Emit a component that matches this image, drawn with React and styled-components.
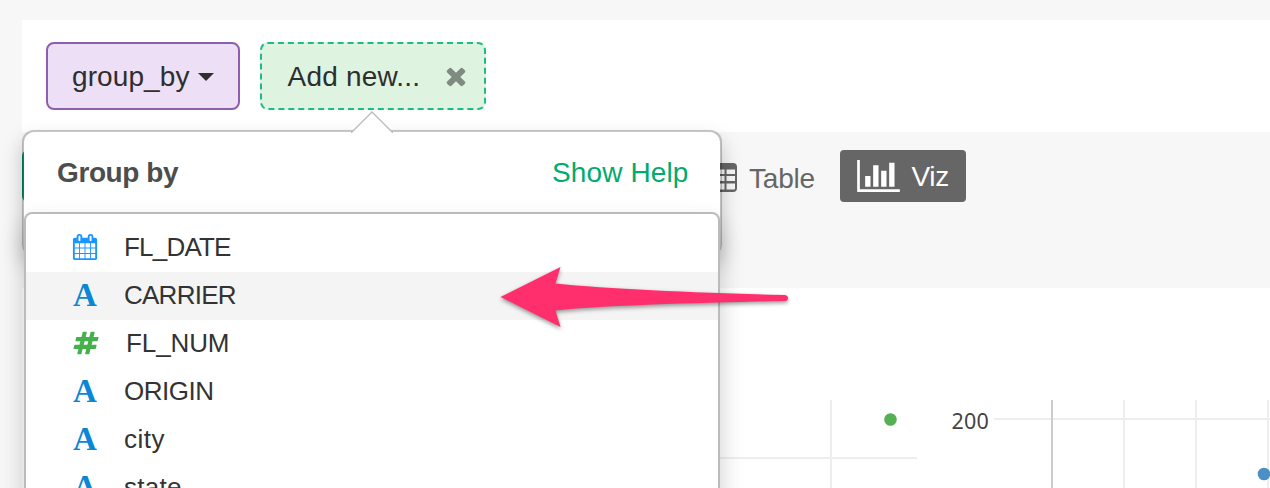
import React from "react";
import styled, { createGlobalStyle } from "styled-components";

const Global = createGlobalStyle`
  * { box-sizing: border-box; }
  html, body { margin: 0; padding: 0; }
  body { overflow: hidden; background: #f7f7f7; }
`;

const Page = styled.div`
  width: 1270px;
  height: 488px;
  padding: 20px 0 0 22px;
  overflow: hidden;
  background: #f7f7f7;
  color: #2e2e2e;
  font-family: "Liberation Sans", Arial, sans-serif;
  font-size: 28px;
  line-height: 32px;
`;

const Steps = styled.header`
  display: flex;
  gap: 20px;
  height: 112px;
  padding: 22px 24px;
  background: #fff;
`;

const Token = styled.div`
  position: relative;
  display: flex;
  align-items: center;
  flex: none;
  width: 194px;
  height: 68px;
  padding: 0 0 0 24px;
  border: 2px solid #8d5fae;
  border-radius: 8px;
  background: #ecdff6;
`;

const NewToken = styled(Token)`
  width: 226px;
  padding-left: 25.500px;
  border: 2px dashed #1ebc85;
  background: #dff4e0;
`;

const Caret = styled.span`
  margin: 2px 0 0 8px;
  border: 8px solid transparent;
  border-top-color: #2f2f2f;
  border-bottom: 0;
`;

const Icon = styled.svg`
  display: block;
  flex: none;
  width: ${(p) => p.$w || 26}px;
  height: ${(p) => p.$h || 26}px;
  margin-left: ${(p) => p.$ml || 0}px;
  fill: ${(p) => p.$color || "currentColor"};
`;

const LetterIcon = styled.span`
  flex: none;
  width: 26px;
  font: bold 33px/44px "Liberation Serif", "Times New Roman", serif;
  text-align: center;
  color: ${(p) => p.$color};
`;

const Label = styled.span`
  flex: none;
  padding-top: 2px;
  white-space: pre;
  letter-spacing: ${(p) => p.$ls || 0}px;
  margin-left: ${(p) => p.$gap || 0}px;
`;

const ViewBar = styled.nav`
  display: flex;
  align-items: flex-start;
  height: 156px;
  padding-top: 18px;
  background: #f7f7f7;
`;

const RunButton = styled.div`
  width: 120px;
  height: 52px;
  border-radius: 6px;
  background: #00a86b;
`;

const ViewTab = styled.div`
  display: flex;
  align-items: center;
  height: 52px;
  border-radius: 4px;
  color: ${(p) => (p.$active ? "#fff" : "#666")};
  background: ${(p) => (p.$active ? "#666" : "transparent")};
  width: ${(p) => p.$width}px;
  padding: ${(p) => (p.$active ? "0 0 0 17px" : "3px 0 0")};
  margin-left: ${(p) => p.$ml || 0}px;
`;

const Charts = styled.main`
  display: flex;
  height: 200px;
  background: #fff;
`;

const Popover = styled.section`
  position: absolute;
  top: 86px;
  left: -240px;
  z-index: 2;
  width: 700px;
  height: 126px;
  border: 2px solid rgba(0, 0, 0, 0.22);
  border-radius: 12px;
  background: #fff;
  background-clip: padding-box;
  box-shadow: 0 10px 20px rgba(0, 0, 0, 0.22);
`;

const Pointer = styled.svg`
  position: absolute;
  top: -21px;
  left: 327px;
  width: 42px;
  height: 22px;
`;

const PopoverHead = styled.div`
  display: flex;
  justify-content: space-between;
  align-items: center;
  height: 81px;
  padding: 0 31.500px 0 33px;
`;

const Title = styled.h2`
  margin: 0;
  font-size: 28px;
  letter-spacing: -0.4px;
  color: #4d4d4d;
`;

const Help = styled.a`
  color: #00ab6b;
  letter-spacing: 0.12px;
`;

const Menu = styled.ul`
  position: relative;
  width: 696px;
  height: 420px;
  margin: -1px 0 0 0;
  padding: 10px 0;
  list-style: none;
  border: 2px solid #bbb;
  border-radius: 8px;
  background: #fff;
  box-shadow: 0 12px 24px rgba(0, 0, 0, 0.2);
`;

const Option = styled.li`
  display: flex;
  align-items: center;
  height: 48px;
  padding: 0 0 2px 46px;
  font-size: 26px;
  color: #333;
  background: ${(p) => (p.$active ? "#f4f4f4" : "#fff")};
`;

const OptionLabel = styled.span`
  white-space: nowrap;
  letter-spacing: ${(p) => p.$ls || 0}px;
  margin-left: ${(p) => p.$gap || 26}px;
`;

const Arrow = styled.svg`
  position: absolute;
  z-index: 5;
  left: 490px;
  top: 256px;
  width: 310px;
  height: 84px;
  filter: drop-shadow(0 2px 2px rgba(0, 0, 0, 0.4));
`;

const PATHS = {
  times: "M1490 1322q0 40-28 68l-136 136q-28 28-68 28t-68-28l-294-294-294 294q-28 28-68 28t-68-28l-136-136q-28-28-28-68t28-68l294-294-294-294q-28-28-28-68t28-68l136-136q28-28 68-28t68 28l294 294 294-294q28-28 68-28t68 28l136 136q28 28 28 68t-28 68l-294 294 294 294q28 28 28 68z",
  chart: "M640 896v512h-256v-512h256zm384-512v1024h-256v-1024h256zm1024 1152v128h-2048v-1536h128v1408h1920zm-640-896v768h-256v-768h256zm384-384v1152h-256v-1152h256z",
  calendar: "M192 1664h288v-288h-288v288zm352 0h320v-288h-320v288zm-352-352h288v-320h-288v320zm352 0h320v-320h-320v320zm-352-384h288v-288h-288v288zm736 736h320v-288h-320v288zm-384-736h320v-288h-320v288zm768 736h288v-288h-288v288zm-384-352h320v-320h-320v320zm-352-864v-288q0-13-9.500-22.500t-22.500-9.500h-64q-13 0-22.500 9.500t-9.500 22.500v288q0 13 9.500 22.500t22.500 9.500h64q13 0 22.500-9.500t9.500-22.500zm736 864h288v-320h-288v320zm-384-384h320v-288h-320v288zm384 0h288v-288h-288v288zm32-480v-288q0-13-9.500-22.500t-22.500-9.500h-64q-13 0-22.500 9.500t-9.500 22.500v288q0 13 9.500 22.500t22.500 9.500h64q13 0 22.500-9.500t9.500-22.500zm384-64v1280q0 52-38 90t-90 38h-1408q-52 0-90-38t-38-90v-1280q0-52 38-90t90-38h128v-96q0-66 47-113t113-47h64q66 0 113 47t47 113v96h384v-96q0-66 47-113t113-47h64q66 0 113 47t47 113v96h128q52 0 90 38t38 90z",
  hashtag: "M991 1024l64-256h-254l-64 256h254zm768-504l-56 224q-7 24-31 24h-327l-64 256h311q15 0 25 12 10 14 6 28l-56 224q-5 24-31 24h-327l-81 328q-7 24-31 24h-224q-16 0-26-12-9-12-6-28l78-312h-254l-81 328q-7 24-31 24h-225q-15 0-25-12-9-12-6-28l78-312h-311q-15 0-25-12-9-12-6-28l56-224q7-24 31-24h327l64-256h-311q-15 0-25-12-10-14-6-28l56-224q5-24 31-24h327l81-328q7-24 32-24h224q15 0 25 12 9 12 6 28l-78 312h254l81-328q7-24 32-24h224q15 0 25 12 9 12 6 28l-78 312h311q15 0 25 12 9 12 6 28z",
  table: "M4 0h24a4 4 0 0 1 4 4v21a4 4 0 0 1-4 4H4a4 4 0 0 1-4-4V4a4 4 0 0 1 4-4zM2 6.500v4.500h7.500V6.500zM11.500 6.500v4.500h8V6.500zM21.500 6.500v4.500H30V6.500zM2 13v5h7.500v-5zM11.500 13v5h8v-5zM21.500 13v5H30v-5zM2 20.500v5a1 1 0 0 0 1 1h6.500v-6zM11.500 20.500v6h8v-6zM21.500 20.500v6H29a1 1 0 0 0 1-1v-5z",
};

const fields = [
  { name: "FL_DATE", icon: "calendar", color: "#1b95ff", ls: -0.8 },
  { name: "CARRIER", color: "#0a88d6", ls: -0.75, active: true },
  { name: "FL_NUM", icon: "hashtag", color: "#46b04c", ls: -0.1, ml: 1, gap: 27 },
  { name: "ORIGIN", color: "#0a88d6", ls: -0.5 },
  { name: "city", color: "#0a88d6", ls: 0.5 },
  { name: "state", color: "#0a88d6", ls: 0.3 },
];

export default function App() {
  return (
    <Page>
      <Global />
      <Steps>
        <Token>
          <Label $ls={0.1}>group_by</Label>
          <Caret />
        </Token>
        <NewToken>
          <Label $ls={0.2}>Add new...</Label>
          <Icon $w={28} $h={28} $ml={22} $color="#7f8a80" viewBox="0 0 1792 1792">
            <path d={PATHS.times} />
          </Icon>
          <Popover>
            <PopoverHead>
              <Title>Group by</Title>
              <Help>Show Help</Help>
            </PopoverHead>
            <Menu>
              {fields.map((f) => (
                <Option key={f.name} $active={f.active}>
                  {f.icon ? (
                    <Icon $color={f.color} $ml={f.ml} viewBox="0 0 1792 1792">
                      <path d={PATHS[f.icon]} />
                    </Icon>
                  ) : (
                    <LetterIcon $color={f.color} aria-hidden="true">A</LetterIcon>
                  )}
                  <OptionLabel $ls={f.ls} $gap={f.gap}>{f.name}</OptionLabel>
                </Option>
              ))}
            </Menu>
            <Pointer viewBox="0 0 42 22">
              <path d="M0 22L21 1L42 22" fill="#fff" stroke="#bbb" strokeWidth="1.300" />
            </Pointer>
          </Popover>
        </NewToken>
      </Steps>
      <ViewBar>
        <RunButton />
        <ViewTab $width={112} $ml={563}>
          <Icon $w={32} $h={29} viewBox="0 0 32 29">
            <path fillRule="evenodd" d={PATHS.table} />
          </Icon>
          <Label $ls={-0.2} $gap={12}>Table</Label>
        </ViewTab>
        <ViewTab $active $width={126} $ml={23}>
          <Icon $w={43} $h={32} viewBox="0 128 2048 1536">
            <path d={PATHS.chart} />
          </Icon>
          <Label $ls={-0.3} $gap={11.5}>Viz</Label>
        </ViewTab>
      </ViewBar>
      <Charts>
        <svg width="1248" height="200" viewBox="22 288 1248 200">
          <path d="M700 458H917M831 400V488M994 419H1270M1124 400V488M1196 400V488M1268 400V488" stroke="#eee" strokeWidth="2" />
          <path d="M1052 400V488" stroke="#ccc" strokeWidth="2" />
          <circle cx="890.500" cy="419.500" r="6.300" fill="#53b151" />
          <circle cx="1264" cy="474" r="6.300" fill="#4a90c4" />
          <text x="951.500" y="429" fontFamily="Noto Sans, Open Sans, sans-serif" fontSize="21.500" letterSpacing="0.200" fill="#444">200</text>
        </svg>
      </Charts>
      <Arrow viewBox="490 256 310 84">
        <path d="M500.500 297L560.500 267L555.500 283.500C610 289 700 293 785 295Q788 295.500 788 298Q788 301 785 301C700 303 610 305 555.500 310.500L560.500 327Z" fill="#ff2f6e" />
      </Arrow>
    </Page>
  );
}
